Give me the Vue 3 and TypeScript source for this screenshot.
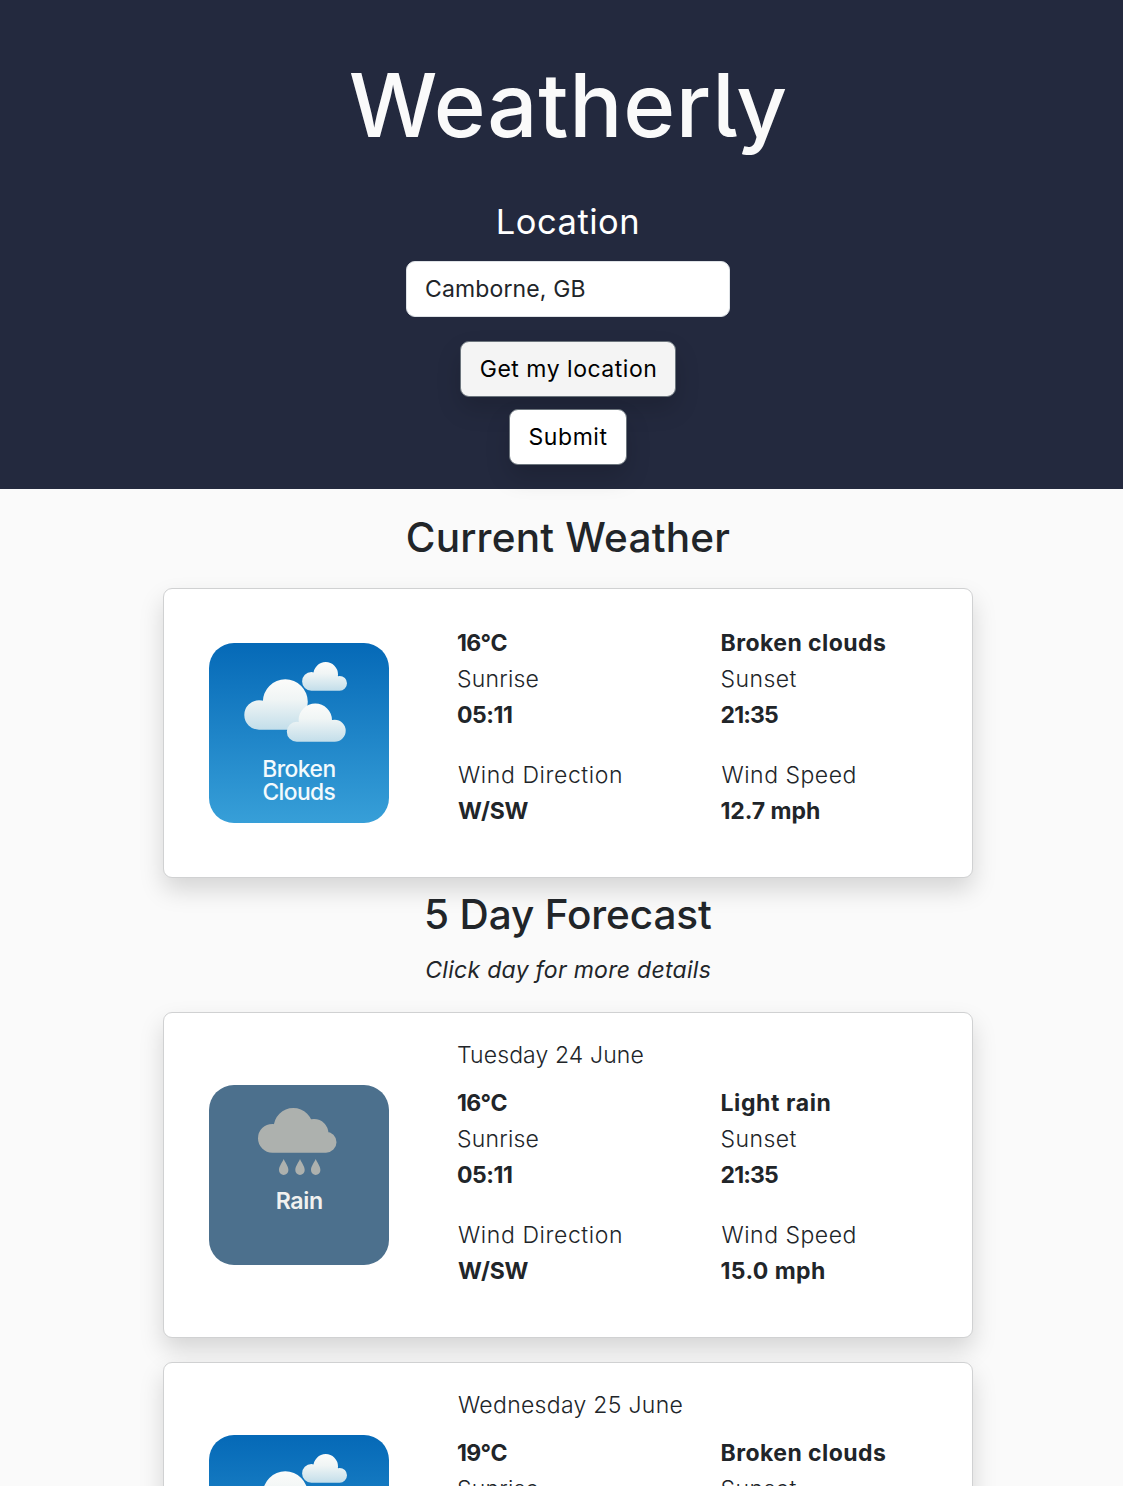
<script setup lang="ts">
import { ref } from 'vue'

type Icon = 'clouds' | 'rain'
type Circle = [number, number, number]

// A label and the width its glyphs span, in pixels
interface Label {
  text: string
  width: number
}

interface Report {
  icon: Icon
  date?: Label
  temp: Label
  summary: Label
  windSpeed: Label
}

const place = ref('Camborne, GB')

const current: Report = {
  icon: 'clouds',
  temp: { text: '16°C', width: 49.5 },
  summary: { text: 'Broken clouds', width: 164.5 },
  windSpeed: { text: '12.7 mph', width: 97.5 },
}

const forecast: Report[] = [
  {
    icon: 'rain',
    date: { text: 'Tuesday 24 June', width: 185.5 },
    temp: { text: '16°C', width: 49.5 },
    summary: { text: 'Light rain', width: 108 },
    windSpeed: { text: '15.0 mph', width: 102.5 },
  },
  {
    icon: 'clouds',
    date: { text: 'Wednesday 25 June', width: 224.5 },
    temp: { text: '19°C', width: 49.5 },
    summary: { text: 'Broken clouds', width: 164.5 },
    windSpeed: { text: '15.0 mph', width: 102.5 },
  },
]

const sections: { title: Label; reports: Report[] }[] = [
  { title: { text: 'Current Weather', width: 321.5 }, reports: [current] },
  { title: { text: '5 Day Forecast', width: 285 }, reports: forecast },
]

// Tracks a line of text so that its glyphs span exactly the given width
const vFit = {
  mounted(el: HTMLElement, binding: { value: number }) {
    const isInput = el instanceof HTMLInputElement
    const text = isInput ? (el as HTMLInputElement).value || place.value : (el.textContent ?? '').trim()
    const ctx = document.createElement('canvas').getContext('2d')
    if (!ctx || text.length < 2) return
    const style = getComputedStyle(el)
    ctx.font = `${style.fontStyle} ${style.fontWeight} ${style.fontSize} ${style.fontFamily}`
    ctx.fontKerning = style.fontKerning as CanvasFontKerning
    const m = ctx.measureText(text)
    const ink = m.actualBoundingBoxLeft + m.actualBoundingBoxRight
    const spacing = (binding.value - ink) / (text.length - 1)
    el.style.letterSpacing = `${spacing}px`
    if (isInput) return
    el.style.marginLeft = `${m.actualBoundingBoxLeft}px`
    el.style.marginRight = `${m.actualBoundingBoxRight - m.width - spacing}px`
  },
}

const disc = ([x, y, r]: Circle) =>
  `M${x - r} ${y}a${r} ${r} 0 1 1 ${2 * r} 0a${r} ${r} 0 1 1 ${-2 * r} 0z`

// Cloud outline: overlapping discs joined by a flat base
const cloud = (discs: Circle[], left: number, right: number, top: number, base: number) =>
  discs.map(disc).join('') + `M${left} ${top}H${right}V${base}H${left}z`

const farCloud = cloud([[116.7, 31.4, 12.3], [102.4, 38.4, 9.3], [130.6, 40.3, 7.4]], 102.4, 130.6, 36, 47.7)
const bigCloud = cloud([[76.3, 58.8, 22.5], [50, 72, 14.7], [86, 74.5, 12.2]], 50, 88, 66, 86.7)
const nearCloud = cloud([[106.3, 77.2, 16.7], [87.8, 88.8, 10], [125.7, 87.7, 11]], 87.8, 125.7, 84, 98.8)
const rainCloud = cloud([[84.3, 42.5, 19.6], [63.4, 53.3, 14.4], [105, 48.5, 14.4], [117, 57.2, 10.5]], 63.4, 117, 50, 67.7)
const drops = [74.7, 91, 106.7]
</script>

<template>
  <div class="viewport">
    <div class="page">
      <header class="hero">
        <h1 class="brand"><span v-fit="434" class="fit">Weatherly</span></h1>
        <form class="search" @submit.prevent>
          <label class="search-label" for="place"><span v-fit="138.5" class="fit">Location</span></label>
          <input id="place" v-model="place" v-fit="158.5" class="field" type="text" />
          <button type="button" class="btn locate"><span v-fit="174.5" class="fit">Get my location</span></button>
          <button type="submit" class="btn submit"><span v-fit="78" class="fit">Submit</span></button>
        </form>
      </header>

      <main>
        <section v-for="(section, s) in sections" :key="s" :class="s ? 'forecast' : 'current'">
          <h2 class="section-title">
            <span v-fit="section.title.width" class="fit">{{ section.title.text }}</span>
          </h2>
          <p v-if="s" class="hint"><span v-fit="284.5" class="fit">Click day for more details</span></p>

          <article v-for="(r, i) in section.reports" :key="i" class="card" :class="{ dated: r.date }">
            <svg v-if="r.icon === 'clouds'" class="icon" viewBox="0 0 180 180">
              <defs>
                <linearGradient id="sky" x1="0" y1="0" x2="0" y2="1">
                  <stop offset="0" stop-color="#0569b7" />
                  <stop offset="1" stop-color="#379fd8" />
                </linearGradient>
                <linearGradient id="puff" x1="0" y1="0" x2="0" y2="1">
                  <stop offset="0" stop-color="#fcfcfa" />
                  <stop offset="0.4" stop-color="#f0f5f5" />
                  <stop offset="1" stop-color="#c3deea" />
                </linearGradient>
              </defs>
              <rect width="180" height="180" rx="25" fill="url(#sky)" />
              <path :d="farCloud" fill="url(#puff)" />
              <path :d="bigCloud" fill="url(#puff)" />
              <path :d="nearCloud" fill="url(#puff)" />
              <g class="icon-text" font-size="22.8" fill="#f3fafd">
                <text x="53.2" y="134" textLength="74">Broken</text>
                <text x="53.4" y="156.8" textLength="73.4">Clouds</text>
              </g>
            </svg>
            <svg v-else class="icon" viewBox="0 0 180 180">
              <rect width="180" height="180" rx="25" fill="#4c708d" />
              <path :d="rainCloud" fill="#adb1ae" />
              <path
                v-for="x in drops"
                :key="x"
                :d="`M${x} 74c1.2 3.2 4.7 7 4.7 11.1a4.7 4.9 0 0 1-9.4 0c0-4.1 3.5-7.9 4.7-11.1z`"
                fill="#adb1ae"
              />
              <text class="icon-text rain" x="66.7" y="124.2" textLength="47.5" font-size="23.2" fill="#f1f1ef">Rain</text>
            </svg>

            <div class="details">
              <p v-if="r.date" class="date"><span v-fit="r.date.width" class="fit">{{ r.date.text }}</span></p>
              <div class="grid">
                <div class="cell">
                  <strong class="temp"><span v-fit="r.temp.width" class="fit">{{ r.temp.text }}</span></strong>
                  <p><span v-fit="80.5" class="fit">Sunrise</span></p>
                  <strong><span v-fit="54" class="fit">05:11</span></strong>
                </div>
                <div class="cell">
                  <strong><span v-fit="r.summary.width" class="fit">{{ r.summary.text }}</span></strong>
                  <p><span v-fit="75" class="fit">Sunset</span></p>
                  <strong><span v-fit="56.5" class="fit">21:35</span></strong>
                </div>
                <div class="cell">
                  <p><span v-fit="163" class="fit">Wind Direction</span></p>
                  <strong><span v-fit="70.5" class="fit">W/SW</span></strong>
                </div>
                <div class="cell">
                  <p><span v-fit="133" class="fit">Wind Speed</span></p>
                  <strong><span v-fit="r.windSpeed.width" class="fit">{{ r.windSpeed.text }}</span></strong>
                </div>
              </div>
            </div>
          </article>
        </section>
      </main>
    </div>
  </div>
</template>

<style>
html,
body {
  overflow: hidden;
  background: #fafafa;
}
</style>

<style scoped>
* {
  box-sizing: border-box;
}

.viewport {
  height: 1486px;
  overflow: hidden;
}

.page {
  width: 1136px;
  color: #212529;
  font-family: Inter, 'DM Sans', sans-serif;
  font-size: 23px;
  line-height: 36px;
}

h1,
h2,
p {
  margin: 0;
  font-weight: inherit;
}

.fit {
  display: inline-block;
  white-space: nowrap;
}

.hero {
  height: 489px;
  padding-top: 48px;
  background: #23293e;
  text-align: center;
}

.brand {
  height: 108px;
  color: #fafafa;
  font-size: 88.5px;
  font-weight: 500;
  font-feature-settings: 'cv05' 1;
  line-height: 113px;
}

.search {
  display: flex;
  flex-direction: column;
  align-items: center;
  padding-top: 44px;
}

.search-label {
  height: 43px;
  color: #fff;
  font-size: 34.5px;
  line-height: 43px;
}

.field {
  width: 324px;
  height: 56px;
  margin: 18px 0 24px;
  padding: 0 18px;
  border: 1px solid #dee2e6;
  border-radius: 9px;
  outline: none;
  background: #fff;
  color: #212529;
  font: inherit;
}

.btn {
  display: flex;
  align-items: center;
  justify-content: center;
  height: 56px;
  padding: 0;
  border: 1px solid #6c757d;
  border-radius: 9px;
  background: #fff;
  box-shadow: 0 12px 24px rgba(0, 0, 0, 0.15);
  color: #000;
  font: inherit;
}

.locate {
  width: 216px;
  margin-bottom: 12px;
  background: #f4f4f4;
}

.submit {
  width: 118px;
  padding-left: 1px;
}

.current {
  padding-top: 24px;
}

.section-title {
  height: 50px;
  padding-left: 1px;
  font-size: 40.5px;
  font-weight: 500;
  line-height: 50px;
  text-align: center;
}

.current .section-title {
  margin-bottom: 25px;
}

.forecast .section-title {
  margin: 12px 0;
}

.hint {
  margin-bottom: 24px;
  padding-left: 1px;
  font-style: italic;
  text-align: center;
}

.card {
  display: flex;
  align-items: center;
  width: 810px;
  height: 290px;
  margin: 0 auto;
  padding-left: 45px;
  border: 1px solid #d0d1d2;
  border-radius: 9px;
  background: #fff;
  box-shadow: 0 12px 24px rgba(0, 0, 0, 0.15);
}

.card.dated {
  height: 326px;
  margin-bottom: 24px;
}

.icon {
  display: block;
  flex: none;
  width: 180px;
  height: 180px;
}

.icon-text {
  font-family: Inter, sans-serif;
  font-weight: 500;
}

.icon-text.rain {
  font-weight: 600;
}

.details {
  align-self: flex-start;
  padding: 36px 0 0 69px;
  font-weight: 300;
}

.dated .details {
  padding-top: 24px;
}

.date {
  height: 36px;
  margin-bottom: 12px;
}

.grid {
  display: grid;
  grid-template-columns: 263.5px 240px;
  row-gap: 24px;
}

.cell > * {
  display: block;
  height: 36px;
}

strong {
  font-weight: 700;
}

.temp {
  font-kerning: none;
}
</style>
